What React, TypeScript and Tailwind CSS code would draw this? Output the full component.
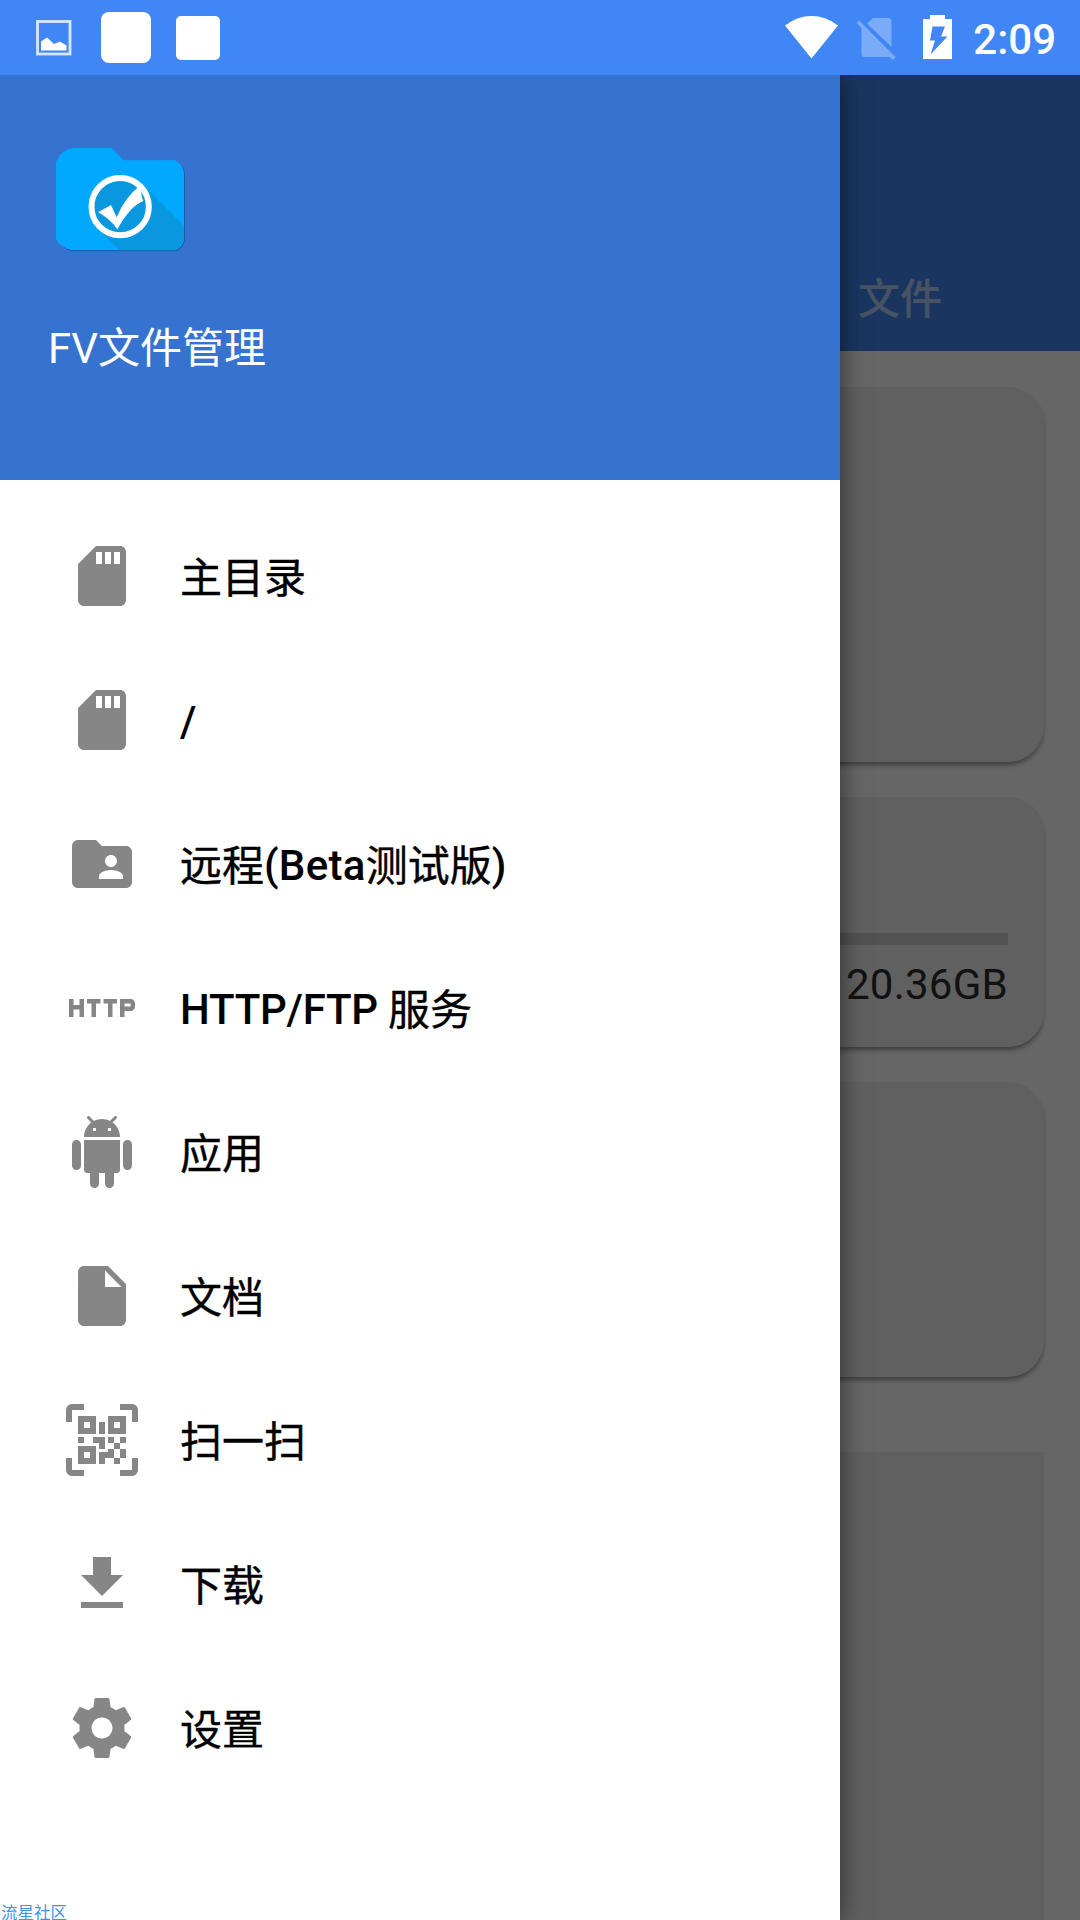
import { ReactNode } from "react";
import { MdFolderShared, MdHttp, MdInsertDriveFile, MdSdCard } from "react-icons/md";

function AndroidIcon() {
  return (
    <svg viewBox="0 0 24 24" className="w-full h-full" fill="currentColor">
      <path d="M6 18c0 .55.45 1 1 1h1v3.5c0 .83.67 1.5 1.5 1.5s1.5-.67 1.5-1.5V19h2v3.5c0 .83.67 1.5 1.5 1.5s1.5-.67 1.5-1.5V19h1c.55 0 1-.45 1-1V8H6v10zM3.5 8C2.67 8 2 8.67 2 9.5v7c0 .83.67 1.5 1.5 1.5S5 17.33 5 16.5v-7C5 8.67 4.33 8 3.5 8zm17 0c-.83 0-1.5.67-1.5 1.5v7c0 .83.67 1.5 1.5 1.5s1.5-.67 1.5-1.5v-7c0-.83-.67-1.5-1.5-1.5zm-4.97-5.84l1.3-1.3c.2-.2.2-.51 0-.71-.2-.2-.51-.2-.71 0l-1.48 1.48C13.85 1.23 12.95 1 12 1c-.96 0-1.86.23-2.66.63L7.85.15c-.2-.2-.51-.2-.71 0-.2.2-.2.51 0 .71l1.31 1.31C6.97 3.26 6 5.01 6 7h12c0-1.99-.97-3.75-2.47-4.84zM10 5H9V4h1v1zm5 0h-1V4h1v1z" />
    </svg>
  );
}

function QrIcon() {
  return (
    <svg viewBox="0 0 24 24" className="w-full h-full" fill="currentColor">
      <path d="M0 6V2a2 2 0 0 1 2-2h4v2H2v4zM18 0h4a2 2 0 0 1 2 2v4h-2V2h-4zM0 18h2v4h4v2H2a2 2 0 0 1-2-2zM22 18h2v4a2 2 0 0 1-2 2h-4v-2h4z" />
      <path
        fillRule="evenodd"
        d="M4 4h6v6H4zM6 6v2h2V6zM14 4h6v6h-6zM16 6v2h2V6zM4 14h6v6H4zM6 16v2h2v-2z"
      />
      <path d="M11 6h2v4h-2zM4 11h2v2H4zM9 11h4v4h-2v-2H9zM14 11h2v2h-2zM18 11h2v2h-2zM16 13h2v2h-2zM14 15h2v3h-3v2h-2v-4h3zM18 15h2v3h-2zM16 18h2v2h-2z" />
    </svg>
  );
}

function DownloadIcon() {
  return (
    <svg viewBox="0 0 24 24" className="w-full h-full" fill="currentColor">
      <path d="M19 9h-4V3H9v6H5l7 7 7-7zM5 18v2h14v-2H5z" />
    </svg>
  );
}

function SettingsIcon() {
  return (
    <svg viewBox="0 0 24 24" className="w-full h-full" fill="currentColor">
      <path d="M19.43 12.98c.04-.32.07-.64.07-.98s-.03-.66-.07-.98l2.11-1.65c.19-.15.24-.42.12-.64l-2-3.46c-.12-.22-.39-.3-.61-.22l-2.49 1c-.52-.4-1.08-.73-1.69-.98l-.38-2.65C14.46 2.18 14.25 2 14 2h-4c-.25 0-.46.18-.49.42l-.38 2.65c-.61.25-1.17.59-1.69.98l-2.49-1c-.23-.09-.49 0-.61.22l-2 3.46c-.13.22-.07.49.12.64l2.11 1.65c-.04.32-.07.65-.07.98s.03.66.07.98l-2.11 1.65c-.19.15-.24.42-.12.64l2 3.46c.12.22.39.3.61.22l2.49-1c.52.4 1.08.73 1.69.98l.38 2.65c.03.24.24.42.49.42h4c.25 0 .46-.18.49-.42l.38-2.65c.61-.25 1.17-.59 1.69-.98l2.49 1c.23.09.49 0 .61-.22l2-3.46c.12-.22.07-.49-.12-.64l-2.11-1.65zM12 15.5c-1.93 0-3.5-1.57-3.5-3.5s1.57-3.5 3.5-3.5 3.5 1.57 3.5 3.5-1.57 3.5-3.5 3.5z" />
    </svg>
  );
}

const MENU: Array<{ label: string; icon: ReactNode; tracking?: string }> = [
  { label: "主目录", icon: <MdSdCard className="w-full h-full" /> },
  { label: "/", icon: <MdSdCard className="w-full h-full" /> },
  {
    label: "远程(Beta测试版)",
    icon: <MdFolderShared className="w-full h-full" />,
    tracking: "tracking-[0.3px]",
  },
  {
    label: "HTTP/FTP 服务",
    icon: <MdHttp className="w-full h-full" />,
    tracking: "tracking-[-0.25px]",
  },
  { label: "应用", icon: <AndroidIcon /> },
  { label: "文档", icon: <MdInsertDriveFile className="w-full h-full" /> },
  { label: "扫一扫", icon: <QrIcon /> },
  { label: "下载", icon: <DownloadIcon /> },
  { label: "设置", icon: <SettingsIcon /> },
];

function StatusBar() {
  return (
    <header className="h-[75px] shrink-0 bg-[#4087f5] flex items-start text-white">
      <svg viewBox="0 0 36 36" className="w-9 h-9 ml-[36px] mt-[20px]">
        <rect x="1.5" y="1.5" width="32.5" height="32.5" fill="none" stroke="white" strokeWidth="2.8" opacity=".8" />
        <path d="M5 30.500V21.500L11 17.500L18 24L24 21.500L30.500 25.500V30.500z" fill="white" />
      </svg>
      <div className="w-[50px] h-[51px] rounded-[8px] bg-white ml-[29px] mt-[12px]" />
      <div className="w-[44px] h-[44px] rounded-[5px] bg-white ml-[25px] mt-[16px]" />
      <div className="ml-auto flex items-start">
        <svg viewBox="0 0 53 43" className="w-[53px] h-[43px] mt-[16px]" fill="white">
          <path d="M0 9.500Q12 0 26.500 0T53 9.500L26.500 42.500z" />
        </svg>
        <svg viewBox="0 0 40 44" className="w-[40px] h-[44px] ml-[18px] mt-[17px]" fill="white" opacity=".3">
          <path d="M11 6.500L17 1H32Q35.500 1 35.500 4.500V30z" />
          <path d="M.5 6L3 3.500L39.500 40L37 43L33.500 40H9Q5.500 40 5.500 36.500V11z" />
        </svg>
        <svg viewBox="0 0 29 44" className="w-[29px] h-[44px] ml-[27px] mt-[15px]" fill="white">
          <path
            fillRule="evenodd"
            d="M7 0H22V4H29V44H0V4H7zM9.500 11.500L7 25.500H12L7.500 39.500L24.500 21.500H18L22 11.500z"
          />
        </svg>
        <span className="ml-[21px] mr-[24px] mt-[19px] text-[42px] leading-[42px] font-medium">2:09</span>
      </div>
    </header>
  );
}

// Folder with a ticked circle and its long shadow
function AppLogo() {
  return (
    <svg viewBox="78 54 390 312" className="w-[130px] h-[104px]">
      <path
        d="M90 99Q96 62 126 57H246L282 94H437Q462 104 464 130V330Q461 355 438 364H126Q96 356 90 330z"
        fill="#1d4f91"
      />
      <path
        d="M78 96Q94 60 126 54H245L281 91H434Q458 101 462 127V330Q458 352 437 361H126Q94 354 78 328z"
        fill="#00a9ff"
      />
      <path d="M338 164L462 288V330Q458 352 437 361H268L204 298z" fill="#0998e0" />
      <circle cx="270.500" cy="230" r="86" fill="#0998e0" stroke="white" strokeWidth="18" />
      <path
        d="M204 247L243 225L260 262Q283 206 324 172L334 168Q331 194 340 213Q302 226 262 298Q238 264 204 247z"
        fill="white"
      />
    </svg>
  );
}

// Latin runs use Roboto Medium; Chinese runs are slightly lighter and sit 1px lower
function MenuLabel({ text, tracking = "" }: { text: string; tracking?: string }) {
  const runs = text.split(/([\u4e00-\u9fff]+)/).filter(Boolean);
  return (
    <span className="ml-[42px] mt-[3px] text-[42px] leading-[50px] font-medium text-black whitespace-pre">
      {runs.map((run, i) =>
        /[\u4e00-\u9fff]/.test(run) ? (
          <span key={i} className="relative top-px font-normal [-webkit-text-stroke:0.4px_black]">
            {run}
          </span>
        ) : (
          <span key={i} className={tracking}>
            {run}
          </span>
        )
      )}
    </span>
  );
}

function Drawer() {
  return (
    <aside className="absolute inset-y-0 left-0 w-[840px] bg-white shadow-[0_0_24px_rgba(0,0,0,0.55)] flex flex-col">
      <div className="h-[405px] shrink-0 bg-[#3673d0] pl-[48px] pt-[73px]">
        <div className="pl-[8px]">
          <AppLogo />
        </div>
        <div className="mt-[72px] text-[42px] leading-[50px] text-white">FV文件管理</div>
      </div>
      <nav className="pt-6">
        <ul>
          {MENU.map((item) => (
            <li key={item.label} className="h-[144px] flex items-center pl-[66px]">
              <span className="w-[72px] h-[72px] shrink-0 text-[#868686]">{item.icon}</span>
              <MenuLabel text={item.label} tracking={item.tracking} />
            </li>
          ))}
        </ul>
      </nav>
      <div className="mt-auto pl-[1px] text-[16.5px] leading-[13px] text-[#3a94f0]">流星社区</div>
    </aside>
  );
}

function Card({ className, children }: { className: string; children?: ReactNode }) {
  return (
    <section className={`shrink-0 bg-[#f0f0f0] ${className}`}>
      {children}
    </section>
  );
}

const CARD_ROUND = "rounded-[36px] shadow-[0_4px_5px_-1px_rgba(0,0,0,0.4)]";

function HomeScreen() {
  return (
    <div className="h-full bg-white flex flex-col">
      <div className="h-[276px] shrink-0 bg-[#4387f0] flex items-end justify-end">
        <span className="mr-[138px] mb-[26px] text-[42px] leading-[50px] font-medium text-white/60">文件</span>
      </div>
      <div className="flex-1 min-h-0 overflow-hidden flex flex-col px-9 pt-9">
        <Card className={`h-[375px] ${CARD_ROUND}`} />
        <Card className={`h-[250px] mt-[35px] px-9 pt-[136px] ${CARD_ROUND}`}>
          <div className="h-3 bg-[#cdcdcd]" />
          <div className="mt-[15px] text-right text-[42px] leading-[50px] tracking-[0.25px] text-[#2d2d2d]">
            20.36GB
          </div>
        </Card>
        <Card className={`h-[295px] mt-[35px] ${CARD_ROUND}`} />
        <Card className="h-[480px] mt-[75px]" />
      </div>
    </div>
  );
}

export default function App() {
  return (
    <div className="w-[1080px] h-[1920px] overflow-hidden flex flex-col font-['Roboto','Noto_Sans_CJK_SC',sans-serif]">
      <StatusBar />
      <main className="relative flex-1 min-h-0 overflow-hidden">
        <HomeScreen />
        <div className="absolute inset-0 bg-black/60" />
        <Drawer />
      </main>
    </div>
  );
}
